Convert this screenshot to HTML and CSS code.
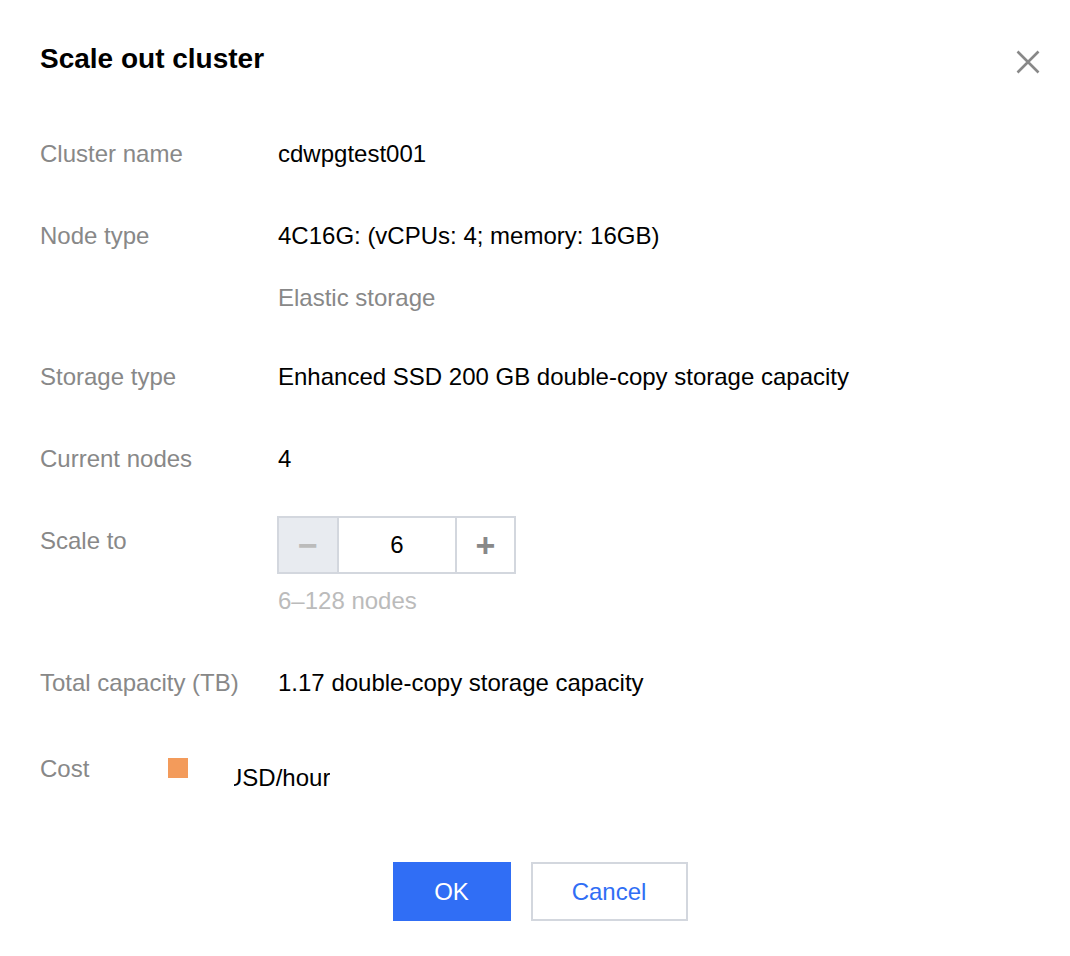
FILE: index.html
```html
<html>

<head>
  <link rel="stylesheet" href="styles.css">
</head>

<body>
  <div class="dialog">
    <div class="dialog-header">
      <h1>Scale out cluster</h1>
      <button class="close-button" title="Close">
        <svg width="24" height="24" viewBox="0 0 24 24">
          <path d="M1.5 1.5 L22.5 22.5 M22.5 1.5 L1.5 22.5" stroke="#888" stroke-width="2.6" fill="none" />
        </svg>
      </button>
    </div>

    <div class="form">
      <div class="row">
        <div class="label">Cluster name</div>
        <div class="value">cdwpgtest001</div>
      </div>
      <div class="row row-tight">
        <div class="label">Node type</div>
        <div class="value">
          <div>4C16G: (vCPUs: 4; memory: 16GB)</div>
          <div class="sub-value">Elastic storage</div>
        </div>
      </div>
      <div class="row">
        <div class="label">Storage type</div>
        <div class="value">Enhanced SSD 200 GB double-copy storage capacity</div>
      </div>
      <div class="row">
        <div class="label">Current nodes</div>
        <div class="value">4</div>
      </div>
      <div class="row">
        <div class="label">Scale to</div>
        <div class="value">
          <div class="stepper">
            <button class="step step-minus">&minus;</button>
            <input class="step-input" type="text" value="6">
            <button class="step step-plus">+</button>
          </div>
          <div class="hint">6&ndash;128 nodes</div>
        </div>
      </div>
      <div class="row row-wide">
        <div class="label">Total capacity (TB)</div>
        <div class="value">1.17 double-copy storage capacity</div>
      </div>
      <div class="cost-row">
        <div class="cost-label">Cost</div>
        <div class="cost-swatch"></div>
        <div class="cost-clip"><span>USD/hour</span></div>
      </div>
    </div>

    <div class="dialog-buttons">
      <button class="ok-button">OK</button>
      <button class="cancel-button">Cancel</button>
    </div>
  </div>
</body>

</html>
```

FILE: styles.css
```css
body {
  margin: 0;
  background-color: white;
  font-family: "Liberation Sans", Arial, sans-serif;
  color: black;
}

.dialog {
  padding: 41px 30px 0 40px;
}

.dialog-header {
  display: flex;
  justify-content: space-between;
  align-items: center;
  height: 36px;
}

h1 {
  margin: 0;
  font-size: 28px;
  font-weight: bold;
  line-height: 36px;
}

.close-button {
  border: none;
  background: none;
  padding: 0;
  margin-top: 6px;
  width: 24px;
  height: 24px;
  cursor: pointer;
}

.form {
  margin-top: 62px;
  font-size: 24px;
  line-height: 30px;
}

.row {
  display: grid;
  grid-template-columns: 238px 1fr;
  margin-bottom: 52px;
}

.row-tight {
  margin-bottom: 49px;
}

.row-wide {
  margin-bottom: 56px;
}

.label {
  color: #888;
}

.sub-value {
  margin-top: 32px;
  color: #888;
}

.stepper {
  display: flex;
  width: max-content;
  margin-top: -10px;
  margin-left: -1px;
  border: 2px solid #d3d7de;
}

.step {
  width: 60px;
  height: 54px;
  border: none;
  padding: 0;
  font-family: inherit;
  font-size: 34px;
  font-weight: bold;
  line-height: 54px;
  color: #888;
  background-color: white;
}

.step-minus {
  background-color: #e8ebf0;
  color: #bbb;
  border-right: 2px solid #d3d7de;
}

.step-plus {
  width: 59px;
  border-left: 2px solid #d3d7de;
}

.step-input {
  width: 116px;
  height: 54px;
  border: none;
  padding: 0;
  text-align: center;
  font-family: inherit;
  font-size: 24px;
  color: black;
  outline: none;
}

.hint {
  margin-top: 12px;
  color: #bbb;
}

.cost-row {
  display: flex;
  align-items: flex-start;
}

.cost-label {
  width: 128px;
  color: #888;
}

.cost-swatch {
  width: 20px;
  height: 20px;
  margin-top: 4px;
  background-color: #f39b5b;
}

.cost-clip {
  margin-left: 46px;
  margin-top: 9px;
  overflow: hidden;
}

.cost-clip span {
  display: block;
  margin-left: -9px;
  white-space: nowrap;
}

.dialog-buttons {
  display: flex;
  justify-content: center;
  gap: 20px;
  margin-top: 69px;
}

.ok-button,
.cancel-button {
  height: 59px;
  font-family: inherit;
  font-size: 24px;
  cursor: pointer;
}

.ok-button {
  width: 118px;
  border: none;
  background-color: #306ef5;
  color: white;
}

.cancel-button {
  width: 157px;
  border: 2px solid #d3d7de;
  background-color: white;
  color: #306ef5;
}
```
